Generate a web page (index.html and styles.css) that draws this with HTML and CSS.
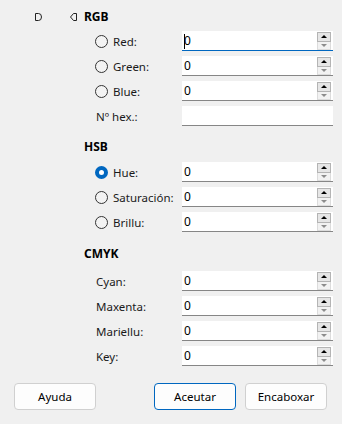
FILE: index.html
```html
<!DOCTYPE html>
<html lang="ast">
<head>
  <meta charset="UTF-8" />
  <meta name="viewport" content="width=device-width, initial-scale=1" />
  <title>Color</title>
  <link rel="stylesheet" href="styles.css">
</head>
<body>
<div class="dialog">
  <div class="form">
    <!-- RGB -->
    <div class="section first">
      <div class="title-row">
        <svg class="mark mark-right" width="7" height="8" viewBox="0 0 7 8"><path d="M0.5 0.5 H3.5 Q6.5 0.5 6.5 4 Q6.5 7.5 3.5 7.5 H0.5 Z" fill="none" stroke="#222" stroke-width="1"/></svg>
        <svg class="mark mark-left" width="7" height="8" viewBox="0 0 7 8"><path d="M6.5 0.5 H3.5 L0.5 4 L3.5 7.5 H6.5 Z" fill="none" stroke="#222" stroke-width="1"/></svg>
        <span class="section-title">RGB</span>
      </div>
      <div class="rows">
        <div class="row">
          <label class="lbl"><span class="radio"></span>Red:</label>
          <div class="field focused"><span class="value"><span class="caret"></span>0</span>
            <span class="spin"><span class="up"></span><span class="down"></span></span></div>
        </div>
        <div class="row">
          <label class="lbl"><span class="radio"></span>Green:</label>
          <div class="field"><span class="value">0</span>
            <span class="spin"><span class="up"></span><span class="down"></span></span></div>
        </div>
        <div class="row">
          <label class="lbl"><span class="radio"></span>Blue:</label>
          <div class="field"><span class="value">0</span>
            <span class="spin"><span class="up"></span><span class="down"></span></span></div>
        </div>
        <div class="row">
          <label class="lbl plain">Nº hex.:</label>
          <div class="field"><span class="value"></span></div>
        </div>
      </div>
    </div>

    <!-- HSB -->
    <div class="section">
      <div class="section-title">HSB</div>
      <div class="rows">
        <div class="row">
          <label class="lbl"><span class="radio checked"></span>Hue:</label>
          <div class="field"><span class="value">0</span>
            <span class="spin"><span class="up"></span><span class="down"></span></span></div>
        </div>
        <div class="row">
          <label class="lbl"><span class="radio"></span>Saturación:</label>
          <div class="field"><span class="value">0</span>
            <span class="spin"><span class="up"></span><span class="down"></span></span></div>
        </div>
        <div class="row">
          <label class="lbl"><span class="radio"></span>Brillu:</label>
          <div class="field"><span class="value">0</span>
            <span class="spin"><span class="up"></span><span class="down"></span></span></div>
        </div>
      </div>
    </div>

    <!-- CMYK -->
    <div class="section cmyk">
      <div class="section-title">CMYK</div>
      <div class="rows">
        <div class="row">
          <label class="lbl plain">Cyan:</label>
          <div class="field"><span class="value">0</span>
            <span class="spin"><span class="up"></span><span class="down"></span></span></div>
        </div>
        <div class="row">
          <label class="lbl plain">Maxenta:</label>
          <div class="field"><span class="value">0</span>
            <span class="spin"><span class="up"></span><span class="down"></span></span></div>
        </div>
        <div class="row">
          <label class="lbl plain">Mariellu:</label>
          <div class="field"><span class="value">0</span>
            <span class="spin"><span class="up"></span><span class="down"></span></span></div>
        </div>
        <div class="row">
          <label class="lbl plain">Key:</label>
          <div class="field"><span class="value">0</span>
            <span class="spin"><span class="up"></span><span class="down"></span></span></div>
        </div>
      </div>
    </div>
  </div>

  <div class="buttons">
    <button class="btn">Ayuda</button>
    <div class="spacer"></div>
    <button class="btn default">Aceutar</button>
    <button class="btn">Encaboxar</button>
  </div>
</div>
</body>
</html>
```

FILE: styles.css
```css
body {
  margin: 0;
  background: #f0f0f0;
  color: #000;
  font-family: "Noto Sans", "Open Sans", sans-serif;
  font-size: 11.5px;
}

.dialog {
  width: 342px;
  height: 424px;
}

.form {
  padding: 9px 9px 0 84px;
}

.section {
  margin-top: 13px;
}
.section.first {
  margin-top: 0;
}
.section.cmyk {
  margin-top: 14px;
}

.title-row {
  display: flex;
  align-items: center;
  margin-left: -84px;
}
.mark {
  display: block;
}
.mark-right {
  margin-left: 35px;
}
.mark-left {
  margin-left: 28px;
  margin-right: 7px;
}

.section-title {
  font-weight: bold;
  font-size: 12px;
  line-height: 16px;
  height: 16px;
}

.rows {
  display: flex;
  flex-direction: column;
  gap: 5px;
  margin: 7px 0 0 11px;
}
.section.first .rows {
  margin-top: 6px;
}
.section.cmyk .rows {
  margin-top: 9px;
}

.row {
  display: grid;
  grid-template-columns: 87px 151px;
  height: 20px;
}

.lbl {
  display: flex;
  align-items: center;
  gap: 5px;
  white-space: nowrap;
  color: #1a1a1a;
}
.lbl.plain {
  padding-left: 1px;
}

.radio {
  width: 11px;
  height: 11px;
  border: 1px solid #333;
  border-radius: 50%;
  background: #f3f3f3;
  flex: none;
}
.radio.checked {
  width: 5px;
  height: 5px;
  border: 4px solid #0067c0;
  background: #fff;
}

.field {
  display: flex;
  align-items: stretch;
  background: #fff;
  border-bottom: 1px solid #868686;
  box-sizing: border-box;
  height: 20px;
}
.field.focused {
  border-bottom-color: #0067c0;
}

.value {
  flex: 1;
  display: flex;
  align-items: center;
  padding-left: 2px;
  font-size: 12px;
  position: relative;
}
.caret {
  position: absolute;
  left: 2px;
  top: 3px;
  width: 1px;
  height: 15px;
  background: #000;
}

.spin {
  width: 14px;
  display: flex;
  flex-direction: column;
  padding: 1px 2px 0 0;
}
.spin .up,
.spin .down {
  flex: 1;
  box-sizing: border-box;
  display: flex;
  align-items: center;
  justify-content: center;
}
.spin .up {
  background: #e6e6e6;
  border: 1px solid #b4b4b4;
}
.spin .down {
  background: #f2f2f2;
  border: 1px solid #dcdcdc;
  border-top: none;
}
.spin .up::before {
  content: "";
  border-left: 3px solid transparent;
  border-right: 3px solid transparent;
  border-bottom: 3px solid #000;
}
.spin .down::before {
  content: "";
  border-left: 3px solid transparent;
  border-right: 3px solid transparent;
  border-top: 3px solid #8c8c8c;
}

.buttons {
  display: flex;
  gap: 9px;
  padding: 0 15px 0 14px;
  margin-top: 17px;
}
.spacer {
  flex: 1;
}
.btn {
  width: 82px;
  height: 27px;
  background: #fdfdfd;
  border: 1px solid #d0d0d0;
  border-radius: 4px;
  font-family: "Noto Sans", "Open Sans", sans-serif;
  font-size: 11.5px;
  color: #000;
  padding: 0;
}
.btn.default {
  border-color: #0067c0;
}
```
